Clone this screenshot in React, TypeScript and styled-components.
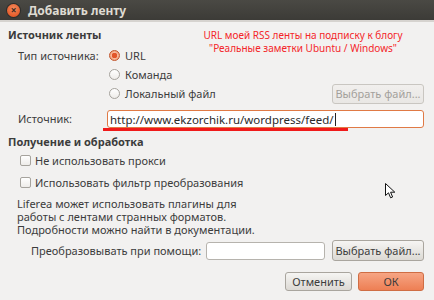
import styled, { createGlobalStyle } from "styled-components";

const GlobalStyle = createGlobalStyle`
  html, body {
    margin: 0;
    padding: 0;
    background: #f2f1f0;
  }
  body {
    font-family: "Noto Sans", "DejaVu Sans", sans-serif;
    font-size: 11px;
    color: #3c3c3c;
  }
`;

const Window = styled.div`
  position: relative;
  width: 434px;
  height: 300px;
  overflow: hidden;
  background: #f2f1f0;
  display: flex;
  flex-direction: column;
`;

const TitleBar = styled.div`
  height: 20px;
  display: flex;
  align-items: center;
  gap: 8px;
  padding-left: 7px;
  background: linear-gradient(#4a4944, #3c3b37);
  border-bottom: 2px solid #d6d3cf;
`;

const CloseButton = styled.div`
  width: 13px;
  height: 13px;
  border-radius: 50%;
  background: radial-gradient(circle at 50% 35%, #f58a5c, #df4a17);
  box-shadow: 0 0 0 1px #2e2d2a;
  display: flex;
  align-items: center;
  justify-content: center;
  color: #3a2a22;
  font-size: 10px;
  font-weight: bold;
  line-height: 1;
`;

const TitleText = styled.div`
  color: #dfdbd2;
  font-weight: bold;
  font-size: 12px;
`;

const Body = styled.div`
  padding: 6px 10px 0 8px;
  display: flex;
  flex-direction: column;
`;

const SectionTitle = styled.div<{ $gap?: number }>`
  font-weight: bold;
  line-height: 14px;
  margin-top: ${({ $gap }) => $gap ?? 0}px;
`;

const SourceGrid = styled.div`
  margin-top: 4px;
  padding-left: 10px;
  display: grid;
  grid-template-columns: 89px 1fr;
  row-gap: 7px;
`;

const Label = styled.div<{ $lh?: number }>`
  line-height: ${({ $lh }) => $lh ?? 19}px;
  white-space: nowrap;
`;

const RadioGroup = styled.div`
  display: flex;
  flex-direction: column;
`;

const OptionRow = styled.div`
  height: 19px;
  display: flex;
  align-items: center;
  gap: 5px;
  padding-left: 2px;
`;

const Radio = styled.span<{ $checked?: boolean }>`
  width: 11px;
  height: 11px;
  border-radius: 50%;
  box-sizing: border-box;
  flex: none;
  border: 1px solid ${({ $checked }) => ($checked ? "#c2552b" : "#a6a39d")};
  background: ${({ $checked }) =>
    $checked
      ? "radial-gradient(circle, #e2562a 0 2.6px, #f6b99c 3px, #f08a5d 100%)"
      : "linear-gradient(#ffffff, #eeece9)"};
`;

const Spacer = styled.div`
  flex: 1;
`;

const Button = styled.div<{ $width: number; $primary?: boolean; $disabled?: boolean; $height?: number }>`
  box-sizing: border-box;
  width: ${({ $width }) => $width}px;
  height: ${({ $height }) => $height ?? 20}px;
  flex: none;
  display: flex;
  align-items: center;
  justify-content: center;
  border-radius: 3px;
  white-space: nowrap;
  border: 1px solid
    ${({ $primary, $disabled }) => ($primary ? "#cf6d44" : $disabled ? "#c9c6c1" : "#a9a59e")};
  background: ${({ $primary, $disabled }) =>
    $primary
      ? "linear-gradient(#f6a584, #ee7f54)"
      : $disabled
      ? "linear-gradient(#f1efed, #e9e7e4)"
      : "linear-gradient(#f6f5f3, #dcd9d4)"};
  color: ${({ $disabled }) => ($disabled ? "#a3a09b" : "#3c3c3c")};
`;

const Input = styled.div<{ $focused?: boolean; $width?: number; $height: number }>`
  box-sizing: border-box;
  height: ${({ $height }) => $height}px;
  width: ${({ $width }) => ($width ? `${$width}px` : "auto")};
  flex: ${({ $width }) => ($width ? "none" : "1")};
  background: #ffffff;
  border: 1px solid ${({ $focused }) => ($focused ? "#e07a45" : "#b6b3ad")};
  border-radius: 3px;
  display: flex;
  align-items: center;
  padding-left: 2px;
  color: #2a2a2a;
  font-size: 11.5px;
`;

const Caret = styled.span`
  display: inline-block;
  width: 1px;
  height: 13px;
  background: #222;
  margin-left: 1px;
`;

const CheckRow = styled.div`
  height: 22px;
  display: flex;
  align-items: center;
  gap: 4px;
  padding-left: 12px;
`;

const CheckBox = styled.span`
  width: 11px;
  height: 11px;
  box-sizing: border-box;
  border: 1px solid #a6a39d;
  border-radius: 2px;
  background: linear-gradient(#ffffff, #eeece9);
  flex: none;
`;

const Note = styled.div`
  margin-top: 4px;
  padding-left: 9px;
  line-height: 13px;
`;

const FilterRow = styled.div`
  margin-top: 4px;
  height: 21px;
  display: flex;
  align-items: center;
  padding-left: 23px;
`;

const FilterLabel = styled.span`
  margin-right: 5px;
`;

const Actions = styled.div`
  margin-top: 11px;
  display: flex;
  justify-content: flex-end;
  gap: 6px;
`;

const Annotation = styled.div`
  position: absolute;
  left: 188px;
  top: 29px;
  width: 230px;
  text-align: center;
  white-space: nowrap;
  color: #f4262a;
  font-size: 10px;
  line-height: 13px;
`;

const Underline = styled.div`
  position: absolute;
  left: 103px;
  top: 128px;
  width: 245px;
  height: 3px;
  background: #f01a1a;
`;

const Cursor = styled.svg`
  position: absolute;
  left: 385px;
  top: 183px;
`;

export default function App() {
  return (
    <Window>
      <GlobalStyle />
      <TitleBar>
        <CloseButton>×</CloseButton>
        <TitleText>Добавить ленту</TitleText>
      </TitleBar>
      <Body>
        <SectionTitle>Источник ленты</SectionTitle>
        <SourceGrid>
          <Label>Тип источника:</Label>
          <RadioGroup>
            <OptionRow>
              <Radio $checked />
              URL
            </OptionRow>
            <OptionRow>
              <Radio />
              Команда
            </OptionRow>
            <OptionRow>
              <Radio />
              Локальный файл
              <Spacer />
              <Button $width={92} $disabled>
                Выбрать файл...
              </Button>
            </OptionRow>
          </RadioGroup>
          <Label $lh={18}>Источник:</Label>
          <Input $focused $height={18}>
            http://www.ekzorchik.ru/wordpress/feed/
            <Caret />
          </Input>
        </SourceGrid>
        <SectionTitle $gap={7}>Получение и обработка</SectionTitle>
        <CheckRow>
          <CheckBox />
          Не использовать прокси
        </CheckRow>
        <CheckRow>
          <CheckBox />
          Использовать фильтр преобразования
        </CheckRow>
        <Note>
          Liferea может использовать плагины для
          <br />
          работы с лентами странных форматов.
          <br />
          Подробности можно найти в документации.
        </Note>
        <FilterRow>
          <FilterLabel>Преобразовывать при помощи:</FilterLabel>
          <Input $width={119} $height={18} />
          <Spacer />
          <Button $width={92} $height={21}>
            Выбрать файл...
          </Button>
        </FilterRow>
        <Actions>
          <Button $width={67} $height={19}>
            Отменить
          </Button>
          <Button $width={66} $height={19} $primary>
            ОК
          </Button>
        </Actions>
      </Body>
      <Annotation>
        URL моей RSS ленты на подписку к блогу
        <br />
        "Реальные заметки Ubuntu / Windows"
      </Annotation>
      <Underline />
      <Cursor width="11" height="16" viewBox="0 0 11 16">
        <path d="M0.5 0.5 L0.5 12.5 L3.5 9.8 L5.6 14.8 L7.6 14 L5.6 9.2 L9.8 9.2 Z" fill="#fff" stroke="#111" strokeWidth="1" strokeLinejoin="round" />
      </Cursor>
    </Window>
  );
}
